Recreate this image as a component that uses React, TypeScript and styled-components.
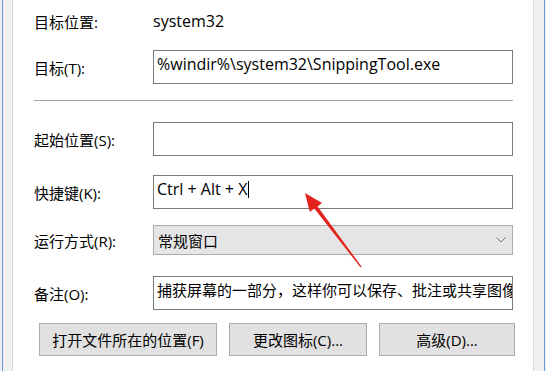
import React from "react";
import styled, { createGlobalStyle } from "styled-components";

const Global = createGlobalStyle`
  html, body { margin: 0; padding: 0; background: #eef0f3; }
  body {
    font-family: "Open Sans", "Noto Sans CJK SC", sans-serif;
    font-size: 15px;
    color: #000;
  }
`;

const Page = styled.div`
  position: relative;
  width: 546px;
  height: 371px;
  overflow: hidden;
  padding-left: 2px;
  box-sizing: border-box;
`;

const Window = styled.div`
  width: 543px;
  height: 371px;
  box-sizing: border-box;
  border-left: 1px solid #6b9ad3;
  border-right: 1px solid #6b9ad3;
  background: #f0f0f0;
  padding: 0 11px 0 9px;
  display: flex;
`;

const Panel = styled.div`
  flex: 1;
  background: #fff;
  border-left: 1px solid #d9d9d9;
  border-right: 1px solid #d9d9d9;
  padding: 0 18px 0 21px;
  display: flex;
  flex-direction: column;
`;

const Row = styled.div<{ $top: number; $h: number }>`
  display: flex;
  align-items: center;
  margin-top: ${(p) => p.$top}px;
  height: ${(p) => p.$h}px;
`;

const Label = styled.div`
  width: 119px;
  flex: none;
  white-space: nowrap;
`;

const Latin = styled.span`
  font-size: 16px;
`;

const Value = styled.div`
  white-space: nowrap;
`;

const Field = styled.div`
  width: 360px;
  height: 100%;
  box-sizing: border-box;
  border: 1px solid #7a7a7a;
  background: #fff;
  padding: 2px 3px;
  line-height: 22px;
  white-space: nowrap;
  overflow: hidden;
`;

const Select = styled.div`
  width: 360px;
  height: 100%;
  box-sizing: border-box;
  border: 1px solid #adadad;
  background: #e5e5e5;
  padding: 0 6px 0 4px;
  display: flex;
  align-items: center;
  justify-content: space-between;
  white-space: nowrap;
`;

const Caret = styled.span`
  display: inline-block;
  width: 1px;
  height: 17px;
  background: #000;
  vertical-align: -3px;
  margin-left: 1px;
`;

const Divider = styled.div`
  height: 1px;
  background: #a0a0a0;
  margin-top: 16px;
  width: 479px;
`;

const ButtonRow = styled.div`
  display: flex;
  gap: 12px;
  margin-top: 13px;
  padding-left: 5px;
`;

const Button = styled.div<{ $w: number }>`
  width: ${(p) => p.$w}px;
  height: 33px;
  box-sizing: border-box;
  border: 1px solid #adadad;
  background: #e1e1e1;
  display: flex;
  align-items: center;
  justify-content: center;
  white-space: nowrap;
`;

const ArrowLayer = styled.svg`
  position: absolute;
  left: 0;
  top: 0;
  width: 546px;
  height: 371px;
  pointer-events: none;
`;

const Chevron = () => (
  <svg width="10" height="6" viewBox="0 0 10 6">
    <path d="M0.5 0.5 L5 5 L9.5 0.5" fill="none" stroke="#707070" strokeWidth="1" />
  </svg>
);

export default function App() {
  return (
    <>
      <Global />
      <Page>
        <Window>
          <Panel>
            <Row $top={10} $h={22}>
              <Label>目标位置:</Label>
              <Value>
                <Latin>system32</Latin>
              </Value>
            </Row>
            <Row $top={18} $h={34}>
              <Label>目标(T):</Label>
              <Field>
                <Latin>%windir%\system32\SnippingTool.exe</Latin>
              </Field>
            </Row>
            <Divider />
            <Row $top={21} $h={34}>
              <Label>起始位置(S):</Label>
              <Field />
            </Row>
            <Row $top={19} $h={34}>
              <Label>快捷键(K):</Label>
              <Field>
                <Latin>Ctrl + Alt + X</Latin>
                <Caret />
              </Field>
            </Row>
            <Row $top={16} $h={30}>
              <Label>运行方式(R):</Label>
              <Select>
                <span>常规窗口</span>
                <Chevron />
              </Select>
            </Row>
            <Row $top={21} $h={34}>
              <Label>备注(O):</Label>
              <Field>捕获屏幕的一部分，这样你可以保存、批注或共享图像。</Field>
            </Row>
            <ButtonRow>
              <Button $w={178}>打开文件所在的位置(F)</Button>
              <Button $w={138}>更改图标(C)...</Button>
              <Button $w={136}>高级(D)...</Button>
            </ButtonRow>
          </Panel>
        </Window>
        <ArrowLayer viewBox="0 0 546 371">
          <polygon
            points="305,193 322,203 317.6,206.4 361.6,266.7 360.4,267.3 314.3,208.6 309.8,212"
            fill="#e5231d"
          />
        </ArrowLayer>
      </Page>
    </>
  );
}
